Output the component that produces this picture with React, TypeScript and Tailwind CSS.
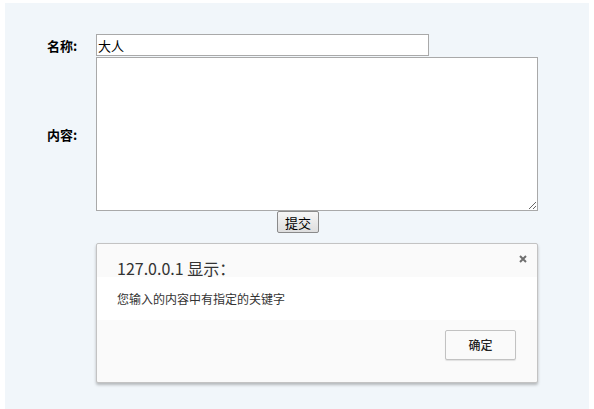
import { useState } from 'react'

const cjk = "font-['Noto_Sans_CJK_SC','Liberation_Sans',sans-serif]"

export default function App() {
  const [name, setName] = useState('大人')
  const [content, setContent] = useState('')

  return (
    <div className={`h-[409px] w-[594px] overflow-hidden bg-white pl-[5px] pt-[3px] ${cjk}`}>
      <div className="h-[406px] w-[584px] bg-[#f1f6fa] pt-[31px]">
        {/* 表单 */}
        <div className="flex items-center">
          <label className="w-[91px] pl-[42px] text-[13px] font-bold leading-none text-black">名称:</label>
          <input
            value={name}
            onChange={(e) => setName(e.target.value)}
            className="h-[22px] w-[333px] border border-[#a9a9a9] bg-white px-[1px] text-[13px] leading-none text-black outline-none"
          />
        </div>
        <div className="mt-[1px] flex items-center">
          <label className="w-[91px] pl-[42px] text-[13px] font-bold leading-none text-black">内容:</label>
          <textarea
            value={content}
            onChange={(e) => setContent(e.target.value)}
            className="h-[154px] w-[442px] resize border border-[#a9a9a9] bg-white text-[13px] outline-none"
          />
        </div>
        <div className="flex h-[22px] pl-[272px]">
          <button className="h-[22px] w-[42px] rounded-[2px] border border-[#8a8a8a] bg-gradient-to-b from-[#f6f6f6] to-[#dedede] text-[13px] leading-none text-black">
            提交
          </button>
        </div>

        {/* 弹窗 */}
        <div className="ml-[91px] mt-[10px] h-[140px] w-[442px] overflow-hidden rounded-[2px] border border-[#c3c3c3] bg-[#fafafa] shadow-[0_2px_3px_rgba(0,0,0,0.25)]">
          <div className="relative h-[33px] pl-[20px] pt-[12px]">
            <span className="text-[16px] leading-none text-[#333]">127.0.0.1 显示：</span>
            <svg className="absolute right-[10px] top-[11px] h-[8px] w-[8px]" viewBox="0 0 8 8">
              <path d="M1 1L7 7M7 1L1 7" stroke="#6f6f6f" strokeWidth="2" />
            </svg>
          </div>
          <div className="flex h-[43px] items-center bg-white pl-[20px] text-[12px] text-[#333]">
            您输入的内容中有指定的关键字
          </div>
          <div className="flex justify-end pr-[21px] pt-[10px]">
            <button className="h-[30px] w-[71px] rounded-[2px] border border-[#c2c2c2] bg-[#fafafa] text-[12px] font-medium text-[#222] shadow-[0_1px_1px_rgba(0,0,0,0.1)]">
              确定
            </button>
          </div>
        </div>
      </div>
    </div>
  )
}
